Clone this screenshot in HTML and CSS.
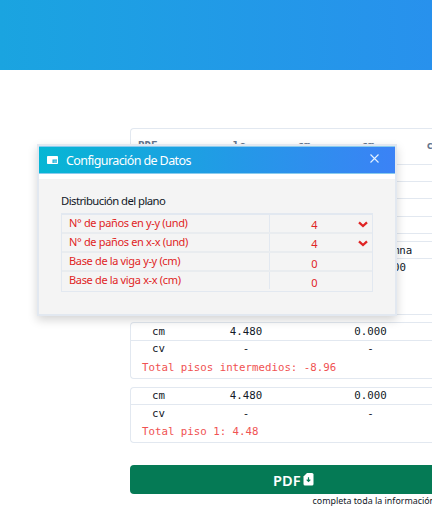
FILE: index.html
```html
<!DOCTYPE html>
<html lang="es">
<head>
<meta charset="utf-8">
<title>Configuración de Datos</title>
<link rel="stylesheet" href="styles.css">
</head>
<body>
<header class="banner"></header>
<main class="content">
  <section class="card summary">
    <div class="head"><span>PDF</span><span>le</span><span>cm</span><span>cm</span><span class="last">c</span></div>
    <div class="line"></div><div class="line"></div><div class="line"></div><div class="line"></div>
  </section>
  <section class="card column-card">
    <div class="line label">Columna</div>
    <div class="line value">0.00</div>
  </section>
  <section class="card floors">
    <div class="row first"><span>cm</span><span>4.480</span><span>0.000</span></div>
    <div class="row"><span>cv</span><span>-</span><span>-</span></div>
    <p class="total">Total pisos intermedios: -8.96</p>
  </section>
  <section class="card floor-one">
    <div class="row first"><span>cm</span><span>4.480</span><span>0.000</span></div>
    <div class="row"><span>cv</span><span>-</span><span>-</span></div>
    <p class="total">Total piso 1: 4.48</p>
  </section>
  <button class="pdf"><span>PDF</span>
    <svg width="11" height="13" viewBox="0 0 11 13"><path fill="#fff" d="M4 0h5q1.500 0 1.500 1.500v9.500q0 1.500-1.500 1.500H2Q.5 12.500.5 11V3.500z"/><path d="M5.500 4.300v4M3.700 6.600l1.800 1.800 1.800-1.800" fill="none" stroke="#057a55" stroke-width="1.200"/></svg>
  </button>
  <p class="note">completa toda la información</p>
</main>
<div class="dialog">
  <div class="titlebar">
    <svg class="window" width="11" height="8" viewBox="0 0 11 8"><rect width="11" height="8" rx=".8" fill="#fff"/><rect x="5.500" y="3.500" width="4.500" height="3.500" fill="#13acd5"/><rect x="6.500" y="4.300" width="3.500" height="2.700" fill="#62c9e5"/></svg>
    <h1>Configuración de Datos</h1>
    <svg class="close" width="9" height="9" viewBox="0 0 9 9"><path d="M.5.500l8 8m0-8l-8 8" stroke="#e5f1ff" stroke-width="1.100"/></svg>
  </div>
  <div class="panel">
    <h2>Distribución del plano</h2>
    <div class="table">
      <div class="item"><span>N° de paños en y-y (und)</span><b>4</b><svg width="10" height="7" viewBox="0 0 10 7"><path d="M1 1.300l4 3.700 4-3.700" fill="none" stroke="#e02424" stroke-width="2.300"/></svg></div>
      <div class="item"><span>N° de paños en x-x (und)</span><b>4</b><svg width="10" height="7" viewBox="0 0 10 7"><path d="M1 1.300l4 3.700 4-3.700" fill="none" stroke="#e02424" stroke-width="2.300"/></svg></div>
      <div class="item low"><span>Base de la viga y-y (cm)</span><b>0</b></div>
      <div class="item low"><span>Base de la viga x-x (cm)</span><b>0</b></div>
    </div>
  </div>
</div>
</body>
</html>
```
FILE: styles.css
```css
* { box-sizing: border-box; }
body { margin: 0; width: 432px; height: 516px; overflow: hidden; background: #fff; position: relative; }
h1, h2, p { margin: 0; font-weight: 400; }
.banner { height: 70px; background: linear-gradient(90deg, #1aa4e0, #2891ed); }
.content { width: 302px; margin-left: 130px; padding-top: 58px; font: 10.75px "DejaVu Sans Mono", monospace; color: #111827; }
.card { border: 1px solid #e2e8f0; border-right: 0; border-radius: 4px 0 0 4px; overflow: hidden; white-space: nowrap; }
.line { height: 17px; border-top: 1px solid #e2e8f0; line-height: 17px; }
.summary { height: 106px; }
.summary .line:nth-child(4) { height: 18px; }
.head { height: 35px; display: grid; grid-template-columns: 57px 89px 40px 88px 20px; padding-left: 7px; line-height: 34px; color: #64748b; font-weight: 700; }
.head span + span { text-align: center; }
.head .last { text-align: right; letter-spacing: -1px; }
.column-card { height: 74px; margin-top: 7px; }
.column-card .line:first-child { border-top: 0; height: 16px; }
.label { padding-left: 236px; }
.value { padding-left: 249px; }
.floors { height: 57px; margin-top: 7px; }
.floor-one { height: 56px; margin-top: 8px; }
.row { display: grid; grid-template-columns: 55px 120px 129px; height: 17px; line-height: 17px; text-align: center; }
.row.first { border-bottom: 1px solid #e2e8f0; }
.floor-one .first { line-height: 16px; }
.floors .first { height: 18px; line-height: 18px; }
.floors .row:nth-child(2) { line-height: 16px; }
.total { padding-left: 11px; line-height: 20px; color: #f05252; }
.pdf { display: flex; align-items: center; gap: 2px; width: 302px; height: 29px; margin: 22px 0 0; padding: 0 0 0 143px; border: 0; border-radius: 4px 0 0 4px; background: #057a55; color: #fff; font: 600 14.6px "Noto Sans", sans-serif; }
.note { padding-left: 182.5px; white-space: nowrap; overflow: hidden; font: 8.9px/14px "Noto Sans", sans-serif; }
.dialog { position: absolute; left: 37px; top: 144px; width: 360px; height: 172px; border: 2px solid #e2e8f0; background: #fff; box-shadow: 0 4px 9px #0000002b; font-family: "Noto Sans", sans-serif; white-space: nowrap; }
.titlebar { display: flex; align-items: center; height: 28px; padding: 0 16px 0 8px; background: linear-gradient(90deg, #06b6d4, #3b82f6); border-top: 1px solid #8acbed; border-bottom: 1px solid #8acbed; color: #fff; }
.titlebar h1 { margin-left: 8px; font-size: 12.5px; letter-spacing: -.6px; }
.close { margin-left: auto; margin-bottom: 3px; }
.panel { height: 135px; margin-top: 5px; padding: 11px 22px; background: #f4f4f4; color: #111827; }
.panel h2 { height: 23px; font-size: 11.3px; line-height: 21px; letter-spacing: -.55px; }
.table { width: 312px; border: 1px solid #e2e8f0; border-top-width: 2px; color: #e02424; }
.item { display: grid; grid-template-columns: 208px 89px 10px; height: 19px; border-bottom: 2px solid #e9ecef; font-size: 11px; line-height: 15px; }
.item:last-child { border-bottom: 0; }
.item span { height: 17px; padding-left: 7px; border-right: 1px solid #e2e8f0; letter-spacing: -.34px; }
.item b { font-weight: 400; text-align: center; line-height: 19px; }
.item.low b { line-height: 22px; }
.item svg { margin: 6px 0 0 -1px; }
```
